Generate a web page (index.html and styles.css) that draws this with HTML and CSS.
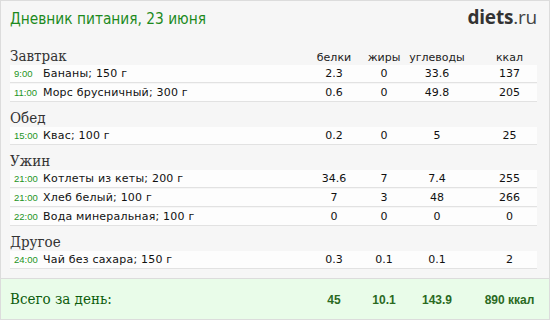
FILE: index.html
```html
<!DOCTYPE html>
<html lang="ru">
<head>
<meta charset="utf-8">
<title>Дневник питания</title>
<link rel="stylesheet" href="styles.css">
</head>
<body>
<div class="widget">
  <div class="main">
    <div class="top">
      <h1 class="title">Дневник питания, 23 июня</h1>
      <div class="logo"><b>diets</b>.ru</div>
    </div>

    <div class="meal">
      <div class="head">
        <span class="meal-name">Завтрак</span>
        <span class="c">белки</span><span class="c">жиры</span><span class="c">углеводы</span><span class="c last">ккал</span>
      </div>
      <div class="row"><span class="time">9:00</span><span class="name">Бананы; 150 г</span><span class="c">2.3</span><span class="c">0</span><span class="c">33.6</span><span class="c last">137</span></div>
      <div class="row"><span class="time">11:00</span><span class="name">Морс брусничный; 300 г</span><span class="c">0.6</span><span class="c">0</span><span class="c">49.8</span><span class="c last">205</span></div>
    </div>

    <div class="meal">
      <div class="head"><span class="meal-name">Обед</span></div>
      <div class="row"><span class="time">15:00</span><span class="name">Квас; 100 г</span><span class="c">0.2</span><span class="c">0</span><span class="c">5</span><span class="c last">25</span></div>
    </div>

    <div class="meal">
      <div class="head"><span class="meal-name">Ужин</span></div>
      <div class="row"><span class="time">21:00</span><span class="name">Котлеты из кеты; 200 г</span><span class="c">34.6</span><span class="c">7</span><span class="c">7.4</span><span class="c last">255</span></div>
      <div class="row"><span class="time">21:00</span><span class="name">Хлеб белый; 100 г</span><span class="c">7</span><span class="c">3</span><span class="c">48</span><span class="c last">266</span></div>
      <div class="row"><span class="time">22:00</span><span class="name">Вода минеральная; 100 г</span><span class="c">0</span><span class="c">0</span><span class="c">0</span><span class="c last">0</span></div>
    </div>

    <div class="meal">
      <div class="head"><span class="meal-name">Другое</span></div>
      <div class="row"><span class="time">24:00</span><span class="name">Чай без сахара; 150 г</span><span class="c">0.3</span><span class="c">0.1</span><span class="c">0.1</span><span class="c last">2</span></div>
    </div>
  </div>

  <div class="footer">
    <span class="total-label">Всего за день:</span>
    <span class="c">45</span><span class="c">10.1</span><span class="c">143.9</span><span class="c last">890 ккал</span>
  </div>
</div>
</body>
</html>
```

FILE: styles.css
```css
html, body {
  margin: 0;
  padding: 0;
  background: #ffffff;
}

.widget {
  box-sizing: border-box;
  width: 550px;
  height: 320px;
  border: 1px solid #dcdcdc;
  background: #f6f6f6;
  display: flex;
  flex-direction: column;
}

.main {
  flex: 1;
  padding: 7px 12px 0 9px;
}

.top {
  display: flex;
  justify-content: space-between;
  align-items: baseline;
  margin-bottom: 13px;
}

.title {
  margin: 0;
  font-family: "DejaVu Sans", Verdana, sans-serif;
  font-stretch: condensed;
  font-weight: normal;
  font-size: 15.3px;
  line-height: 18px;
  color: #1d8a1d;
}

.logo {
  font-family: "Open Sans", sans-serif;
  font-size: 19px;
  line-height: 18px;
  color: #444444;
  letter-spacing: -0.2px;
}

.logo b {
  font-weight: 700;
  color: #333333;
}

.head,
.row,
.footer {
  display: grid;
  grid-template-columns: 33px 1fr 52px 48px 58px 71px;
  align-items: baseline;
}

.head {
  height: 24px;
  padding-top: 7px;
  box-sizing: border-box;
}

.meal-name {
  grid-column: span 2;
  font-family: "DejaVu Serif", Georgia, serif;
  font-stretch: condensed;
  font-size: 15px;
  line-height: 17px;
  color: #333333;
}

.head .c {
  font-family: "DejaVu Sans", Verdana, sans-serif;
  font-size: 11px;
  color: #222222;
}

.c {
  text-align: center;
}

.c.last {
  padding-left: 16px;
}

.row {
  height: 17px;
  line-height: 17px;
  background: #fdfdfd;
  border-bottom: 1px solid #e2e2e2;
  margin-bottom: 1px;
  font-family: "DejaVu Sans", Verdana, sans-serif;
  font-size: 11px;
  color: #111111;
}

.time {
  padding-left: 4px;
  font-family: "Liberation Sans", Arial, sans-serif;
  font-size: 9.5px;
  color: #1e951e;
}

.name {
  letter-spacing: 0.2px;
}

.footer {
  height: 40px;
  border-top: 1px solid #dcdcdc;
  background: #e9fce9;
  padding: 0 12px 0 9px;
  line-height: 40px;
}

.total-label {
  grid-column: span 2;
  font-family: "DejaVu Serif", Georgia, serif;
  font-stretch: condensed;
  font-size: 15px;
  color: #0d5c0d;
}

.footer .c {
  font-family: "Liberation Sans", Arial, sans-serif;
  font-weight: bold;
  font-size: 12px;
  color: #2b6a1f;
}
```
